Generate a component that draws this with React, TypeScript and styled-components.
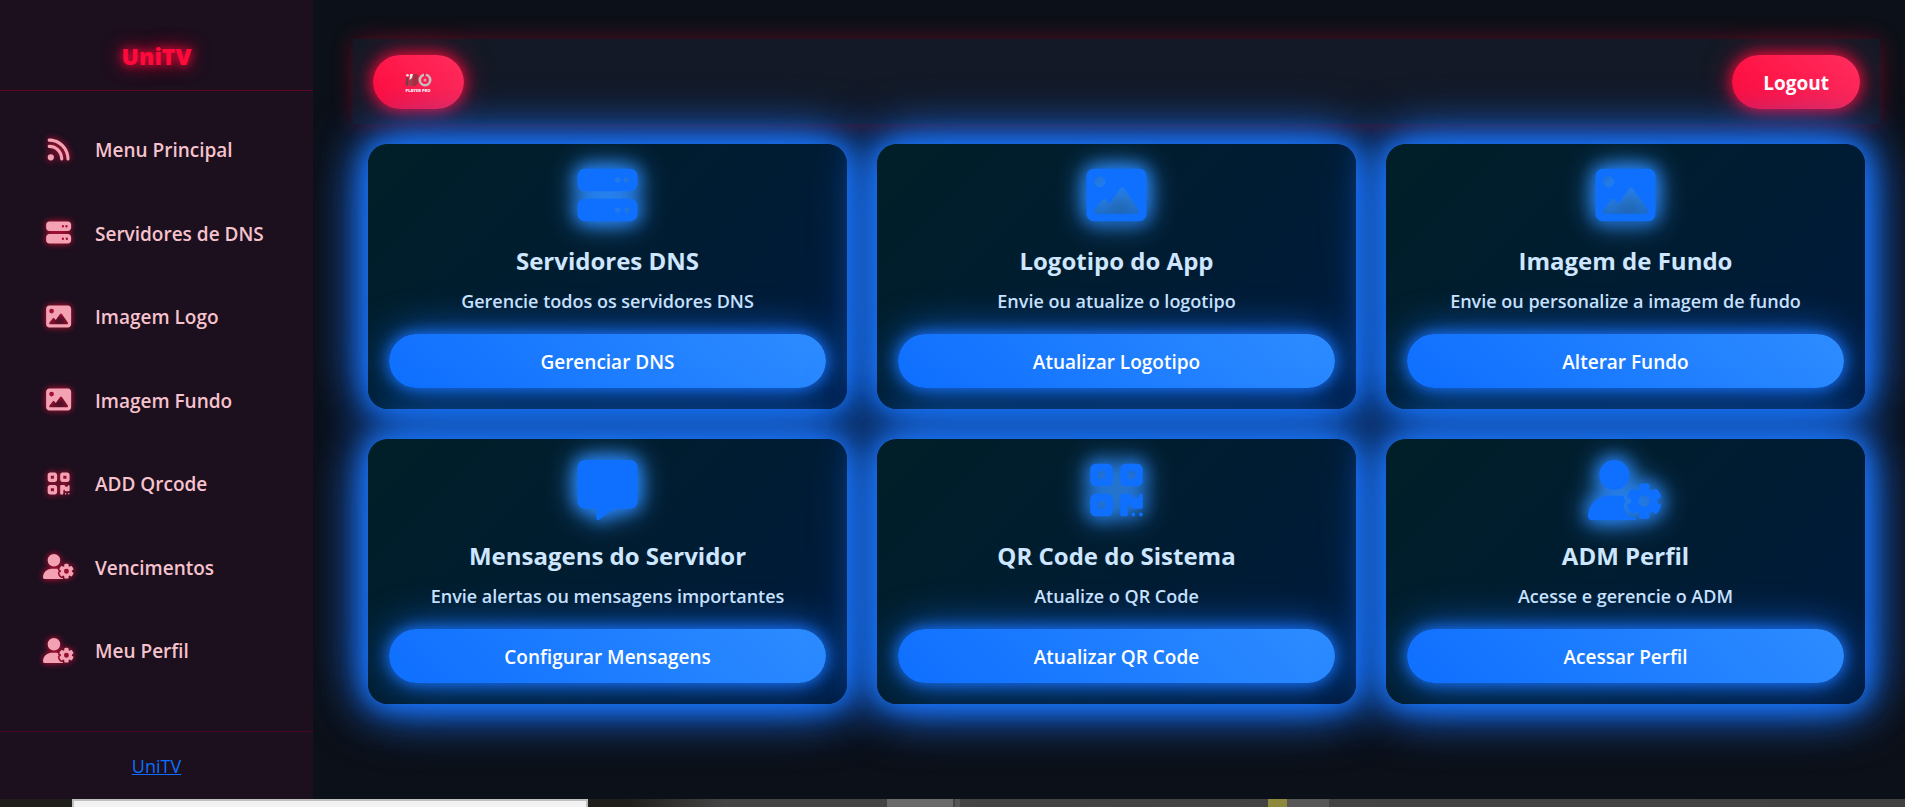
import React from "react";
import styled, { createGlobalStyle } from "styled-components";
import type { IconType } from "react-icons";
import {
  FaRss,
  FaServer,
  FaImage,
  FaQrcode,
  FaUserGear,
  FaMessage,
} from "react-icons/fa6";

const GlobalStyle = createGlobalStyle`
  *, *::before, *::after { box-sizing: border-box; }
  html, body, #root { height: 100%; }
  body {
    margin: 0;
    overflow: hidden;
    background: #0c1018;
    color: #cfe6ff;
    font-family: "Open Sans", "Noto Sans", sans-serif;
    font-size: 19px;
  }
`;

const Page = styled.div`
  display: flex;
  flex-direction: column;
  min-height: 100vh;
`;

const Shell = styled.div`
  display: flex;
  flex: 1;
`;

const Sidebar = styled.aside`
  position: relative;
  z-index: 1;
  display: flex;
  flex-direction: column;
  flex: none;
  width: 313px;
  background: #1c0f1e;
`;

const Brand = styled.div`
  padding: 40px 0 17px;
  border-bottom: 1px solid #5c0620;
  color: #ff0a3c;
  font-size: 23px;
  font-weight: 800;
  line-height: 33px;
  text-align: center;
  text-shadow: 0 0 10px #ff0a3c, 0 0 20px #ff0a3c;
`;

const Menu = styled.nav`
  display: flex;
  flex: 1;
  flex-direction: column;
  justify-content: space-between;
  padding: 29px 20px 50px;
`;

const MenuItem = styled.a`
  display: flex;
  align-items: center;
  gap: 18px;
  height: 60px;
  padding: 0 21px;
  color: #f6c2cd;
  font-weight: 600;
  text-decoration: none;
  white-space: nowrap;
`;

const MenuIcon = styled.span`
  display: flex;
  justify-content: center;
  width: 36px;
  padding-bottom: 2px;
  color: #f3a2b4;
  font-size: 25px;

  svg {
    width: 1.25em;
    height: 1em;
    overflow: visible;
    filter: drop-shadow(0 0 3px #e0103c);
  }
`;

const SidebarFooter = styled.footer`
  padding: 22px 0 21px;
  border-top: 1px solid #4b0620;
  font-size: 18px;
  line-height: 24px;
  text-align: center;
`;

const FooterLink = styled.a`
  color: #0d6efd;
`;

const Main = styled.main`
  flex: 1;
  min-width: 0;
  padding: 39px 25px 0 40px;
`;

const Topbar = styled.header`
  display: flex;
  align-items: center;
  justify-content: space-between;
  height: 85px;
  padding: 0 20px;
  background: #131926;
  box-shadow: 0 0 20px rgba(255, 10, 60, 0.3);
`;

const RedButton = styled.button`
  display: flex;
  align-items: center;
  justify-content: center;
  height: 54px;
  padding: 2px 31px 0;
  border: 0;
  border-radius: 30px;
  background: linear-gradient(45deg, #ff0a3c, #ff2d5e);
  box-shadow: 0 0 15px #ff0a3c, 0 0 30px rgba(255, 10, 60, 0.5);
  color: #fff;
  font: inherit;
  font-weight: 700;
`;

const CardGrid = styled.section`
  display: grid;
  grid-template-columns: repeat(3, 1fr);
  gap: 30px;
  padding: 20px 15px 0;
`;

const Card = styled.article`
  position: relative;
  display: flex;
  flex-direction: column;
  align-items: center;
  padding: 21px;
  border-radius: 20px;
  background: linear-gradient(135deg, #001f27, #001a3c);
  box-shadow: 0 0 25px #1a72f5, 0 0 45px #1a72f5, 0 0 60px #1a72f5;
  text-align: center;
`;

const CardIcon = styled.span`
  display: flex;
  color: #0f70ff;
  font-size: 60px;

  svg {
    width: 1.25em;
    height: 1em;
    overflow: visible;
    filter: drop-shadow(0 0 8px #1e7cf5) drop-shadow(0 0 12px #3a94f5);
  }
`;

const CardTitle = styled.h2`
  margin: 20px 0 10px;
  color: #cfe6ff;
  font-size: 24px;
  font-weight: 700;
  line-height: 32px;
`;

const CardText = styled.p`
  margin: 0 0 19px;
  font-size: 18px;
  font-weight: 600;
  line-height: 28px;
`;

const BlueButton = styled.button`
  width: 100%;
  height: 54px;
  padding: 2px 20px 0;
  border: 0;
  border-radius: 30px;
  background: linear-gradient(45deg, #0f6fff, #2d8cff);
  box-shadow: 0 0 15px #1874ff, 0 0 40px rgba(24, 116, 255, 0.8);
  color: #fff;
  font: inherit;
  font-weight: 600;
`;

const Dock = styled.div`
  position: relative;
  z-index: 2;
  display: flex;
  height: 8px;
  background: linear-gradient(90deg, #201f1c 0 33%, #444 38%, #414141);
`;

const DockPiece = styled.span<{ $width: number; $gap: number; $color: string; $framed?: boolean }>`
  flex: none;
  width: ${(p) => p.$width}px;
  margin-left: ${(p) => p.$gap}px;
  border: ${(p) => (p.$framed ? "2px solid #c0c0c0" : "0")};
  border-bottom: 0;
  background: ${(p) => p.$color};
`;

const PlayerLogo = () => (
  <svg width="29" height="20" viewBox="0 0 29 20" role="img" aria-label="IBO Player Pro">
    <path d="M2 4.5h2.500l-.5 8H1.500z" fill="#7d3b45" />
    <circle cx="3.500" cy="2.300" r="1.300" fill="#f4e8e8" />
    <path d="M6 1h3l-1.500 12H5z" fill="#8d4a50" />
    <path d="M6 1h3l-1 4-2.500 2z" fill="#eee3e3" />
    <path d="M9.500 1h3q3 1.500 1 5 2 4-2 7H8z" fill="#a3303f" />
    <circle cx="21" cy="7" r="5.200" fill="none" stroke="#c3c1c0" strokeWidth="2.600" />
    <path d="M20 0h2l-.5 3.500h-1.500z" fill="#e62048" />
    <circle cx="21" cy="7" r="1.500" fill="#d9a0a8" />
    <text x="14" y="18.500" textAnchor="middle" fill="#fff" fontSize="4" fontWeight="800">
      PLAYER PRO
    </text>
  </svg>
);

const menuItems: { icon: IconType; label: string }[] = [
  { icon: FaRss, label: "Menu Principal" },
  { icon: FaServer, label: "Servidores de DNS" },
  { icon: FaImage, label: "Imagem Logo" },
  { icon: FaImage, label: "Imagem Fundo" },
  { icon: FaQrcode, label: "ADD Qrcode" },
  { icon: FaUserGear, label: "Vencimentos" },
  { icon: FaUserGear, label: "Meu Perfil" },
];

const cards: { icon: IconType; title: string; text: string; action: string }[] = [
  { icon: FaServer, title: "Servidores DNS", text: "Gerencie todos os servidores DNS", action: "Gerenciar DNS" },
  { icon: FaImage, title: "Logotipo do App", text: "Envie ou atualize o logotipo", action: "Atualizar Logotipo" },
  { icon: FaImage, title: "Imagem de Fundo", text: "Envie ou personalize a imagem de fundo", action: "Alterar Fundo" },
  { icon: FaMessage, title: "Mensagens do Servidor", text: "Envie alertas ou mensagens importantes", action: "Configurar Mensagens" },
  { icon: FaQrcode, title: "QR Code do Sistema", text: "Atualize o QR Code", action: "Atualizar QR Code" },
  { icon: FaUserGear, title: "ADM Perfil", text: "Acesse e gerencie o ADM", action: "Acessar Perfil" },
];

export default function App() {
  return (
    <>
      <GlobalStyle />
      <Page>
        <Shell>
          <Sidebar>
            <Brand>UniTV</Brand>
            <Menu>
              {menuItems.map(({ icon: Icon, label }) => (
                <MenuItem key={label} href="#">
                  <MenuIcon>
                    <Icon />
                  </MenuIcon>
                  {label}
                </MenuItem>
              ))}
            </Menu>
            <SidebarFooter>
              <FooterLink href="#">UniTV</FooterLink>
            </SidebarFooter>
          </Sidebar>
          <Main>
            <Topbar>
              <RedButton aria-label="IBO Player Pro">
                <PlayerLogo />
              </RedButton>
              <RedButton>Logout</RedButton>
            </Topbar>
            <CardGrid>
              {cards.map(({ icon: Icon, title, text, action }) => (
                <Card key={title}>
                  <CardIcon>
                    <Icon />
                  </CardIcon>
                  <CardTitle>{title}</CardTitle>
                  <CardText>{text}</CardText>
                  <BlueButton>{action}</BlueButton>
                </Card>
              ))}
            </CardGrid>
          </Main>
        </Shell>
        <Dock>
          <DockPiece $width={516} $gap={72} $color="#f2f2f2" $framed />
          <DockPiece $width={66} $gap={299} $color="#6a6a6a" />
          <DockPiece $width={5} $gap={2} $color="#555" />
          <DockPiece $width={19} $gap={308} $color="#8d883c" />
          <DockPiece $width={42} $gap={0} $color="#575757" />
        </Dock>
      </Page>
    </>
  );
}
